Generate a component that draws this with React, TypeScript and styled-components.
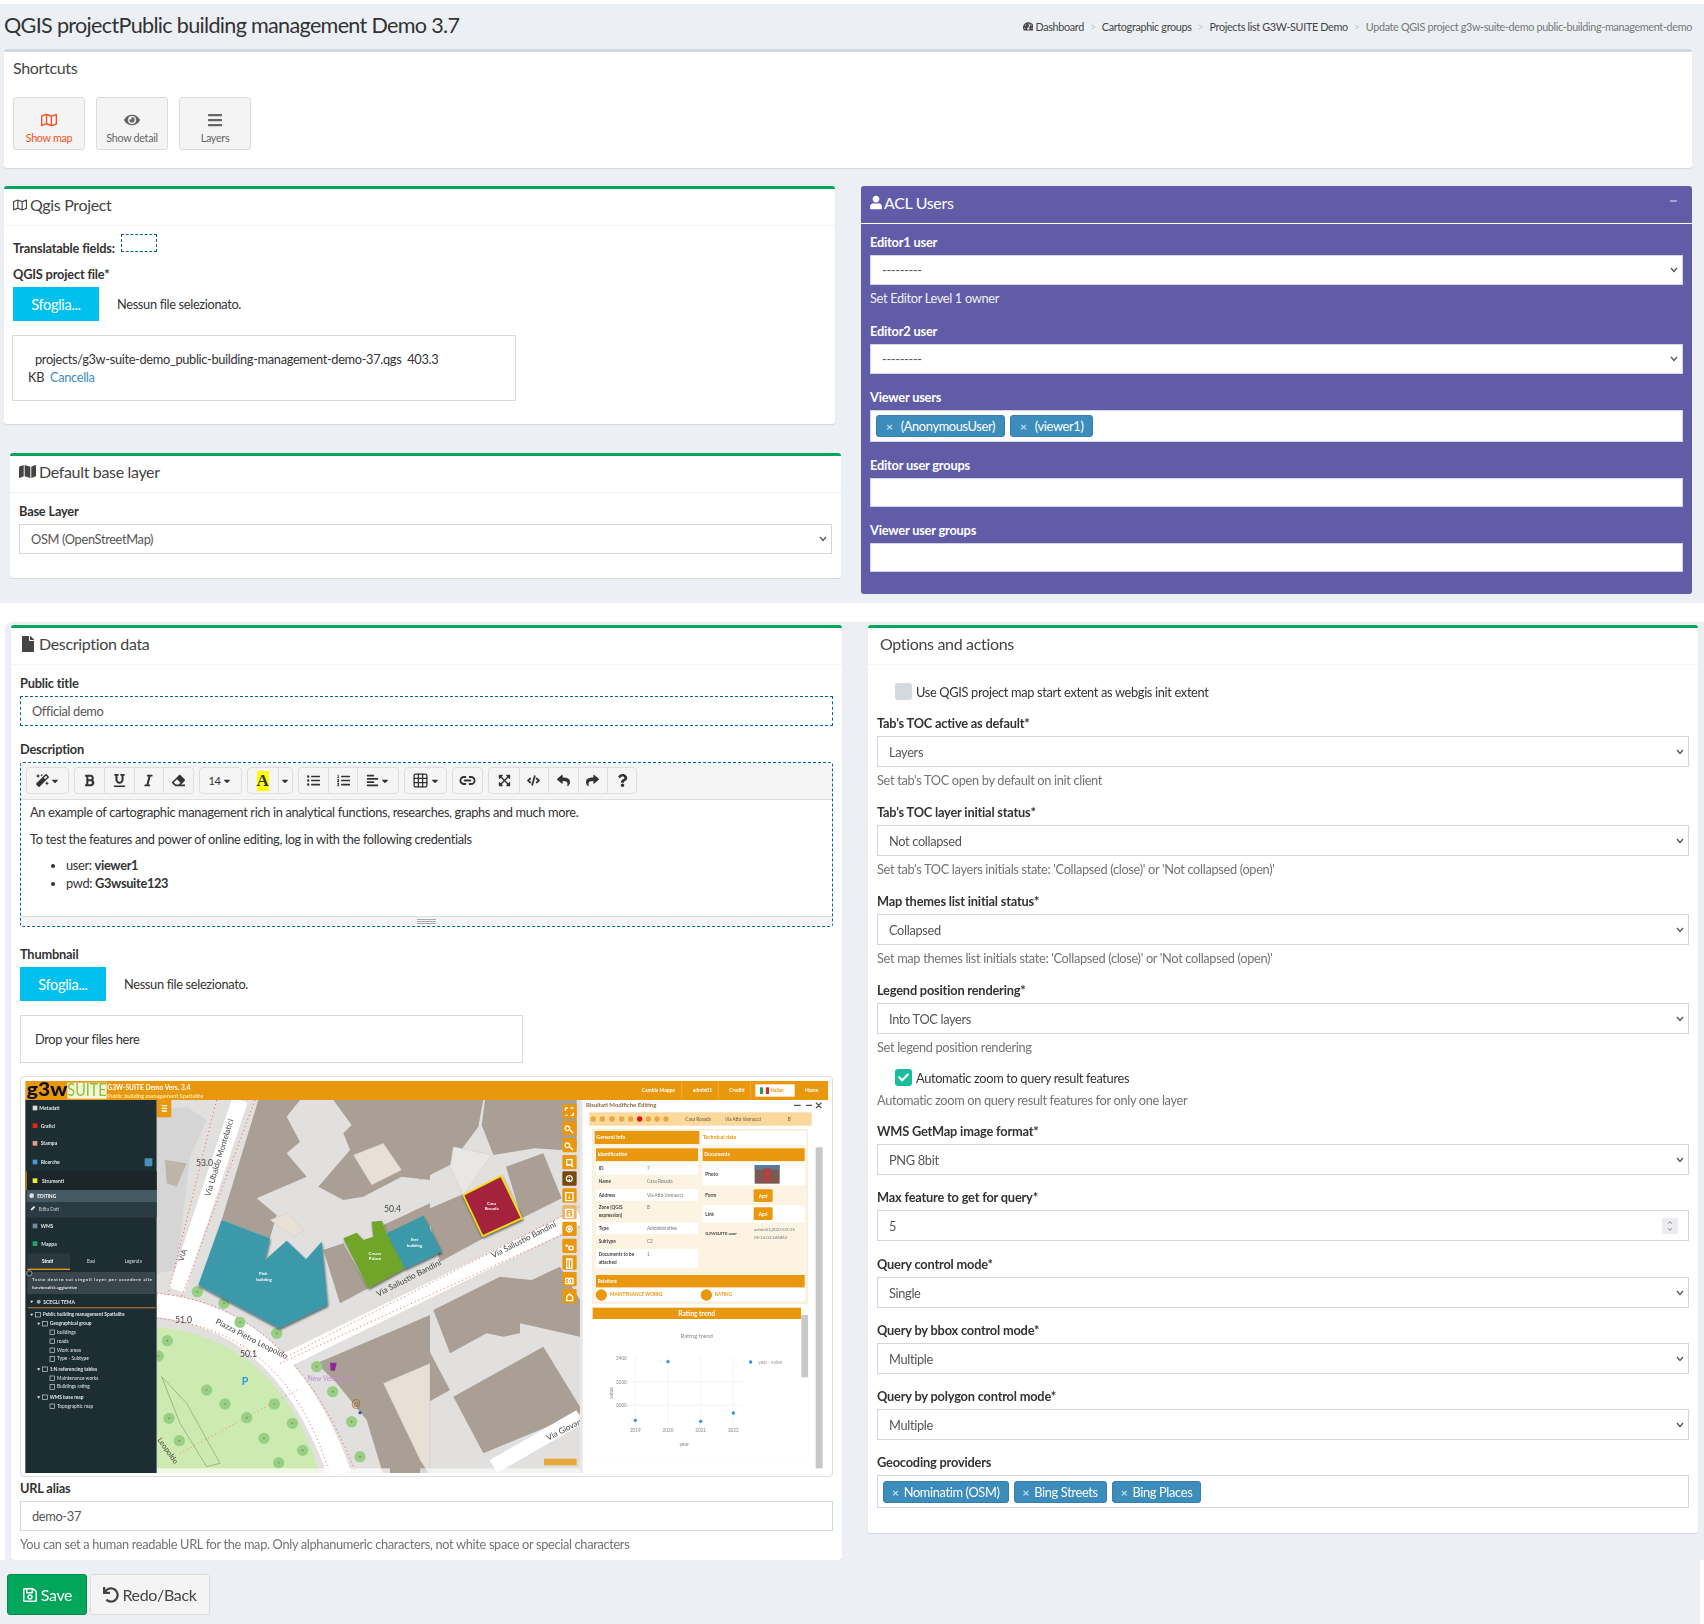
import React from "react";
import styled, { createGlobalStyle } from "styled-components";
import {
  FaRegMap, FaMap, FaEye, FaBars, FaUser, FaFile, FaTachometerAlt, FaRegSave, FaUndo, FaMagic, FaBold, FaUnderline,
  FaItalic, FaEraser, FaListUl, FaListOl, FaAlignLeft, FaExpandArrowsAlt, FaCode, FaReply, FaShare,
  FaQuestion, FaCaretDown, FaCheck, FaMinus, FaChevronUp, FaChevronDown,
} from "react-icons/fa";
import { Grid3x3, Link2 } from "lucide-react";

const chevron = `url("data:image/svg+xml,%3Csvg xmlns='http://www.w3.org/2000/svg' width='8' height='6'%3E%3Cpath d='M1 1l3 3.4L7 1' fill='none' stroke='%23555' stroke-width='1.3'/%3E%3C/svg%3E")`;

const Global = createGlobalStyle`
  html, body { margin: 0; padding: 0; background: #fff; }
  body { font-family: "Lato", "Liberation Sans", sans-serif; font-size: 12.8px; letter-spacing: -0.026em; color: #333; }
  * { box-sizing: border-box; }
  button, input, select { letter-spacing: inherit; }
`;
const Page = styled.div`width: 1704px; min-height: 1624px; padding-top: 4px; background: #fff; display: flex; flex-direction: column;`;
const TopSection = styled.section`background: #ecf0f5; padding: 0 12px 9px 4px; height: 599px;`;
const HeaderBar = styled.header`height: 45px; display: flex; align-items: center; justify-content: space-between;`;
const PageTitle = styled.h1`margin: 0; font-size: 21.6px; letter-spacing: -0.032em; font-weight: 400; color: #333; position: relative; top: -2px;`;
const Crumbs = styled.nav`display: flex; align-items: center; font-size: 10.8px; color: #444; gap: 6px;`;
const CrumbLink = styled.span`display: inline-flex; align-items: center; gap: 2px;`;
const CrumbSep = styled.span`color: #ccc;`;
const CrumbCurrent = styled.span`color: #777;`;
const ShortcutBox = styled.section`height: 119px; background: #fff; border-top: 3px solid #d2d6de; border-radius: 3px; padding: 6px 9px 0; box-shadow: 0 1px 1px rgba(0,0,0,.1);`;
const BoxTitle = styled.h3<{ $icon?: number }>`margin: 0; font-size: 16px; line-height: 20px; font-weight: 400; color: #444; display: flex; align-items: center; gap: 3px; svg { width: ${(p) => p.$icon ?? 16}px; height: ${(p) => p.$icon ?? 16}px; }`;
const ShortcutRow = styled.div`display: flex; gap: 11px; margin-top: 19px;`;
const AppButton = styled.button<{ $active?: boolean }>`width: 72px; height: 53px; padding: 14px 0 0; background: #f4f4f4; border: 1px solid #ddd; border-radius: 3px; font: inherit; font-size: 10.8px; color: ${(p) => (p.$active ? "#f4511e" : "#666")}; display: flex; flex-direction: column; align-items: center; gap: 3px; svg { width: 16px; height: 16px; }`;
const Columns = styled.div`display: flex; gap: 20px; margin-top: 18px; align-items: flex-start;`;
const LeftStack = styled.div`width: 837px; display: flex; flex-direction: column;`;
const Box = styled.section<{ $inset?: boolean; $h?: number; $w?: number }>`width: ${(p) => p.$w ?? 831}px; height: ${(p) => p.$h}px; margin-left: ${(p) => (p.$inset ? 6 : 0)}px; margin-top: ${(p) => (p.$inset ? 29 : 0)}px; background: #fff; border-top: 3px solid #00a65a; border-radius: 3px; box-shadow: 0 1px 1px rgba(0,0,0,.1); flex: none;`;
const BoxHead = styled.div<{ $pad?: number }>`height: 37px; padding: 0 ${(p) => p.$pad ?? 9}px 5px; border-bottom: 1px solid #f4f4f4; display: flex; align-items: center;`;
const BoxBody = styled.div<{ $top?: number }>`padding: ${(p) => p.$top ?? 8}px 9px 0;`;
const Label = styled.label<{ $light?: boolean }>`display: block; height: 20px; line-height: 20px; margin-bottom: 3px; font-weight: 700; font-size: 12.8px; letter-spacing: -0.015em; color: ${(p) => (p.$light ? "#fff" : "#333")};`;
const Group = styled.div<{ $gap?: number }>`margin-bottom: ${(p) => p.$gap ?? 12}px;`;
const Select = styled.select<{ $h?: number }>`display: block; width: 100%; height: ${(p) => p.$h ?? 31}px; padding: 0 11px; appearance: none; background: #fff ${chevron} no-repeat right 4px center; border: 1px solid #d2d6de; border-radius: 0; font: inherit; color: #555;`;
const TextInput = styled.input<{ $h?: number; $dashed?: boolean }>`display: block; width: 100%; height: ${(p) => p.$h ?? 30}px; padding: 0 11px; background: #fff; border: 1px ${(p) => (p.$dashed ? "dashed #00659a" : "solid #d2d6de")}; border-radius: 0; font: inherit; color: #555; outline: none;`;
const Help = styled.div<{ $light?: boolean }>`height: 19px; line-height: 19px; margin-top: 4px; color: ${(p) => (p.$light ? "#f0f0f6" : "#737373")};`;
const TransRow = styled.div`display: flex; align-items: flex-start; height: 24px; margin-bottom: 6px;`;
const TransLabel = styled.span`font-weight: 700; font-size: 12.8px; letter-spacing: -0.015em; line-height: 20px; margin-top: 4px; width: 108px;`;
const TransSlot = styled.div`width: 36px; height: 18px; border: 1px dashed #00659a;`;
const FileRow = styled.div`display: flex; align-items: center; gap: 18px;`;
const BrowseButton = styled.span`width: 86px; height: 34px; background: #00c0ef; color: #fff; font-size: 14.6px; display: flex; align-items: center; justify-content: center;`;
const Dropzone = styled.div<{ $w: number; $h: number; $pad: string }>`width: ${(p) => p.$w}px; height: ${(p) => p.$h}px; margin-top: 14px; margin-left: ${(p) => (p.$w === 504 ? -1 : 0)}px; padding: ${(p) => p.$pad}; border: 1px solid #d9d9d9; line-height: 18px;`;
const FileLine = styled.div<{ $indent?: number }>`padding-left: ${(p) => p.$indent ?? 0}px;`;
const LinkText = styled.a`color: #3c8dbc; margin-left: 3px;`;
const AclBox = styled.section`width: 831px; height: 408px; background: #605ca8; border-radius: 3px; color: #fff;`;
const AclHead = styled.div`height: 38px; border-bottom: 1px solid #fff; padding: 0 9px 4px; display: flex; align-items: center; justify-content: space-between; font-size: 16px;`;
const AclTitle = styled.span`display: flex; align-items: center; gap: 2px; svg { width: 12px; height: 15px; }`;
const AclMinus = styled(FaMinus)`width: 11px; height: 8px; color: rgba(255,255,255,.6); margin: 0 4px 3px 0;`;
const AclBody = styled.div`padding: 8px 9px 0;`;
const TagInput = styled.div<{ $h: number; $pad: number }>`height: ${(p) => p.$h}px; background: #fff; border: 1px solid #d2d6de; padding: ${(p) => p.$pad}px 5px 0; display: flex; gap: 5px; align-items: flex-start;`;
const Tag = styled.span<{ $dense?: boolean }>`height: 22px; padding: 0 ${(p) => (p.$dense ? 8 : 9)}px; background: #3c8dbc; border: 1px solid #367fa9; border-radius: 3px; color: #fff; display: inline-flex; align-items: center; gap: ${(p) => (p.$dense ? 5 : 8)}px;`;
const TagX = styled.span`color: rgba(255,255,255,.7); font-size: 12px; font-weight: 700;`;
const WhiteBand = styled.div`height: 19px; background: #fff;`;
const LowerPanel = styled.section`margin-left: 5px; height: 938px; background: #ecf0f5; border-top-left-radius: 8px; padding: 3px 6px 0; display: flex; gap: 26px; align-items: flex-start;`;
const EditorFrame = styled.div`height: 165px; border: 1px dashed #00659a; border-radius: 3px; display: flex; flex-direction: column; margin-bottom: 17px;`;
const Toolbar = styled.div`height: 37px; background: #f5f5f5; border-bottom: 1px solid #ddd; padding: 4px 0 0 5px; display: flex; gap: 5px; flex: none;`;
const ToolGroup = styled.div`display: flex; height: 27px; border: 1px solid #ddd; border-radius: 4px;`;
const ToolButton = styled.span<{ $w?: number }>`width: ${(p) => p.$w ?? 29.4}px; display: flex; align-items: center; justify-content: center; gap: 1px; color: #333; font-size: 11px; svg { width: 13px; height: 13px; } & + & { border-left: 1px solid #ddd; }`;
const CaretIcon = styled(FaCaretDown)`&& { width: 10px; height: 10px; }`;
const WideIcon = styled.span`display: flex; svg { width: 17px; height: 17px; }`;
const HighlightA = styled.span`background: #ff0; font-family: "Liberation Serif", serif; font-weight: 700; font-size: 17px; line-height: 20px; width: 12px; text-align: center; color: #333;`;
const EditorBody = styled.div`flex: 1; padding: 2px 9px 0; line-height: 20px; color: #333;`;
const Para = styled.p`margin: 0 0 7px;`;
const EditorList = styled.ul`margin: 0; padding-left: 36px; line-height: 18px;`;
const EditorFoot = styled.div`height: 10px; flex: none; background: #f5f5f5; border-top: 1px solid #ddd; display: flex; flex-direction: column; align-items: center; justify-content: center; gap: 1px;`;
const GripLine = styled.i`display: block; width: 19px; height: 1px; background: #aaa;`;
const ImageCard = styled.div`height: 401px; margin-top: 13px; padding: 4px; border: 1px solid #ddd; border-radius: 4px; margin-bottom: 1px;`;
const MapSvg = styled.svg`display: block; width: 803px; height: 392px; letter-spacing: 0;`;
const CheckRow = styled.div<{ $mb?: number }>`display: flex; align-items: center; gap: 4px; padding-left: 18px; height: 17px; margin-bottom: ${(p) => p.$mb ?? 13}px;`;
const CheckMark = styled.span<{ $on?: boolean }>`width: 17px; height: 17px; border-radius: 3px; background: ${(p) => (p.$on ? "#1abc9c" : "#d3d9dc")}; color: #fff; display: flex; align-items: center; justify-content: center; svg { width: 11px; height: 11px; }`;
const NumberWrap = styled.div`position: relative;`;
const Spinner = styled.span`position: absolute; right: 11px; top: 8px; width: 16px; height: 16px; background: #ececf0; display: flex; flex-direction: column; align-items: center; justify-content: center; gap: 2px; color: #888; svg { width: 6px; height: 5px; }`;
const FooterBar = styled.footer`margin-right: 4px; height: 64px; background: #ecf0f5; padding: 14px 0 0 7px; display: flex; gap: 3px;`;
const SaveButton = styled.button`width: 80px; height: 41px; background: #00a65a; border: 1px solid #008d4c; border-radius: 3px; color: #fff; font: inherit; font-size: 16px; display: flex; align-items: center; justify-content: center; gap: 3px;`;
const BackButton = styled.button`width: 120px; height: 41px; background: #f4f4f4; border: 1px solid #ddd; border-radius: 3px; color: #444; font: inherit; font-size: 16px; display: flex; align-items: center; justify-content: center; gap: 3px;`;

const Field = ({ label, value, help, h, light, gap }: { label: string; value: string; help?: string; h?: number; light?: boolean; gap?: number }) => (
  <Group $gap={gap}>
    <Label $light={light}>{label}</Label>
    <Select $h={h} defaultValue={value}><option>{value}</option></Select>
    {help && <Help $light={light}>{help}</Help>}
  </Group>
);

const Tags = ({ items, h, pad, dense }: { items: string[]; h: number; pad: number; dense?: boolean }) => (
  <TagInput $h={h} $pad={pad}>
    {items.map((t) => <Tag $dense={dense} key={t}><TagX>×</TagX>{t}</Tag>)}
  </TagInput>
);

const toolbar: React.ReactNode[][] = [
  [<ToolButton $w={41} key="a"><FaMagic /><CaretIcon /></ToolButton>],
  [<ToolButton key="b"><FaBold /></ToolButton>, <ToolButton key="c"><FaUnderline /></ToolButton>, <ToolButton key="d"><FaItalic /></ToolButton>, <ToolButton key="e"><FaEraser /></ToolButton>],
  [<ToolButton $w={41} key="f">14<CaretIcon /></ToolButton>],
  [<ToolButton $w={30} key="g"><HighlightA>A</HighlightA></ToolButton>, <ToolButton $w={14} key="h"><CaretIcon /></ToolButton>],
  [<ToolButton key="i"><FaListUl /></ToolButton>, <ToolButton key="j"><FaListOl /></ToolButton>, <ToolButton $w={41} key="k"><FaAlignLeft /><CaretIcon /></ToolButton>],
  [<ToolButton $w={41} key="l"><WideIcon><Grid3x3 strokeWidth={1.8} /></WideIcon><CaretIcon /></ToolButton>],
  [<ToolButton $w={29} key="m"><WideIcon><Link2 strokeWidth={2.6} /></WideIcon></ToolButton>],
  [<ToolButton key="n"><FaExpandArrowsAlt /></ToolButton>, <ToolButton key="o"><FaCode /></ToolButton>, <ToolButton key="p"><FaReply /></ToolButton>, <ToolButton key="q"><FaShare /></ToolButton>, <ToolButton key="r"><FaQuestion /></ToolButton>],
];

const trees = [[472,812],[445,858],[590,960],[645,1002],[793,1002],[710,1043],[477,1045],[847,1060],[762,1105],[508,1112],[878,1141],[806,1178],[562,665],[642,700],[690,757],[800,790],[920,890],[968,965],[1050,1160],[1025,1055]];
const brownA = ["745,90 870,90 830,140 870,215 830,250 890,320 740,385 800,435 780,505 635,450","970,90 1260,90 1260,330 1175,320 1060,380 1000,390 925,350 1020,240 1000,190 1025,165","940,540 1000,520 1075,655 990,700","1120,465 1260,400 1260,560 1185,597","920,880 1260,735 1260,1215 1120,1215 1070,1050 980,940"];
const lightA = ["1030,255 1120,220 1175,300 1085,345","1120,940 1260,880 1260,1215 1230,1170","780,450 830,430 885,480 850,500"];
const brownB = ["0,90 190,90 175,170 90,285 0,330","195,90 470,90 470,230 420,240 345,235 220,255 185,165","258,290 370,250 425,385 305,445","18,420 130,372 190,505 60,575","40,720 240,620 335,630 420,590 480,690 480,800 300,760 300,790 250,800 200,790 90,850","100,980 370,830 480,1010 480,1030 190,1150","0,790 90,960 0,1010"];
const sideItems: [string, number, number, string][] = [["Metadati",88,120,"#ddd"],["Grafici",92,173,"#e21"],["Stampa",92,226,"#e98"],["Ricerche",92,282,"#49d"],["Strumenti",96,338,"#ee3"],["WMS",92,474,"#789"],["Mappa",94,527,"#2a6"]];
const treeItems: [string, number, number, boolean][] = [["Public building management Spatialite",98,738,true],["Geographical group",119,765,true],["buildings",141,791,false],["roads",141,818,false],["Work areas",141,845,false],["Type - Subtype",141,871,false],["1:N referencing tables",119,902,true],["Maintenance works",141,929,false],["Buildings rating",141,955,false],["WMS base map",119,986,true],["Topographic map",141,1013,false]];
const toolY = [103,153,204,255,304,355,405,455,506,556,606,657];
const toolGlyph = ["M436 114h8M460 136h-8M436 114v8M460 136v-8M460 114h-8M436 136h8","M442 118a7 7 0 1 0 .1 0M450 130l9 9","M442 118a7 7 0 1 0 .1 0M450 130l9 9","M440 117h16v16h-16zM450 130l9 9","M448 116a9 9 0 1 0 .1 0M448 120v2M448 126v6","M437 116h22v24h-22zM448 122v2M448 127v8","M437 116h22v24h-22zM448 122v2M448 127v8","M448 116a9 9 0 1 0 .1 0M448 122a3 3 0 1 0 .1 0","M436 124h8M440 120v8M447 126h12v10h-12z","M440 114h16v28h-16zM448 114v28","M437 122h22v16h-22zM448 126a4 4 0 1 0 .1 0","M440 138v-12l8-8 10 8v12z"];
const idRows: [string, string, number][] = [["ID","7",300],["Name","Casa Rosada",340],["Address","Via Atto Vannucci",380],["Zone (QGIS","B",418],["expression)","",441],["Type","Administrative",480],["Subtype","C2",520],["Documents to be","1",558],["attached","",581]];

const MapShot = () => (
  <MapSvg viewBox="0 0 803 392" fontFamily="Lato, sans-serif">
    <defs>
      <pattern id="hatch" width="6" height="6" patternUnits="userSpaceOnUse" patternTransform="rotate(-30)">
        <rect width="6" height="6" fill="#b0a69b" /><path d="M0 1.5H6M0 4.5H6" stroke="#9c9287" strokeWidth="1" />
      </pattern>
      <clipPath id="mapArea"><rect x="440" y="90" width="1270" height="1125" /></clipPath>
      <filter id="soft"><feGaussianBlur stdDeviation="0.3" /></filter>
      <filter id="drop"><feDropShadow dx="2" dy="5" stdDeviation="3" floodColor="#000" floodOpacity=".6" /></filter>
    </defs>
    <rect width="803" height="392" fill="#fff" />
    <g filter="url(#soft)">
      <g transform="translate(-15,-11) scale(.33333)">
        <g clipPath="url(#mapArea)">
          <rect x="440" y="90" width="1270" height="1125" fill="#e1e0df" />
          {brownA.map((p) => <polygon key={p} points={p} fill="url(#hatch)" />)}
          <g transform="translate(1230,0)">
            {brownB.map((p) => <polygon key={p} points={p} fill="url(#hatch)" />)}
            <polygon points="100,230 215,255 130,375 90,290" fill="#e9e7e4" stroke="#bbb" />
          </g>
          {lightA.map((p) => <polygon key={p} points={p} fill="#e8dfd5" stroke="#bbb" />)}
          <polygon points="440,120 530,110 590,150 540,260 500,600 440,610" fill="#d5d5d5" />
          <polygon points="465,270 530,280 500,350 470,340" fill="#bdb4aa" />
          <path d="M690 90L500 660" stroke="#fff" strokeWidth="48" fill="none" />
          <path d="M735 90L515 680 440 700" stroke="#f55" strokeWidth="3" strokeDasharray="3 9" fill="none" />
          <path d="M620 90L470 690" stroke="#f55" strokeWidth="3" strokeDasharray="3 9" fill="none" />
          <path d="M440 705C660 730 860 850 990 1215" stroke="#fff" strokeWidth="70" fill="none" />
          <path d="M440 770C640 790 840 900 930 1215L440 1215Z" fill="#cdebb0" />
          <path d="M440 670C680 690 890 830 1040 1215" stroke="#f55" strokeWidth="3" strokeDasharray="3 9" fill="none" />
          <path d="M440 745C660 765 860 880 960 1215" stroke="#f55" strokeWidth="3" strokeDasharray="3 9" fill="none" />
          <path d="M820 875L1710 440" stroke="#fff" strokeWidth="44" fill="none" />
          <path d="M830 860L1710 410" stroke="#f55" strokeWidth="3" strokeDasharray="3 9" fill="none" />
          <path d="M810 880L1710 470" stroke="#f55" strokeWidth="3" strokeDasharray="3 9" fill="none" />
          <path d="M1450 1190L1710 1040" stroke="#fff" strokeWidth="44" fill="none" />
          <path d="M455 920L530 1000 630 1180 590 1190 510 1060Z" fill="none" stroke="#8a9a70" strokeWidth="2" />
          <path d="M510 1150L860 960" stroke="#f77" strokeWidth="3" strokeDasharray="3 9" />
          {trees.map(([x, y]) => <g key={`${x}-${y}`}><circle cx={x} cy={y} r="17" fill="#94d184" /><circle cx={x} cy={y} r="2.5" fill="#d55" /></g>)}
          <g filter="url(#drop)">
            <polygon points="635,450 780,505 765,570 830,512 888,568 935,515 953,705 808,775 565,645" fill="#3a99a9" />
            <polygon points="1000,505 1040,488 1060,510 1090,500 1085,455 1115,452 1130,490 1185,595 1075,655" fill="#6fa52a" />
            <polygon points="1130,490 1240,437 1295,545 1185,597" fill="#3a99a9" />
            <polygon points="1360,375 1473,318 1535,445 1418,498" fill="#a4243b" stroke="#f4e20e" strokeWidth="5" />
          </g>
          <g fontSize="13" fontWeight="700" fill="#fff" textAnchor="middle">
            <text x="760" y="616">Pink</text><text x="762" y="632">building</text>
            <text x="1095" y="555">Cascar</text><text x="1095" y="571">Palace</text>
            <text x="1214" y="514">Iket</text><text x="1214" y="530">building</text>
            <text x="1445" y="405">Casa</text><text x="1445" y="421">Rosada</text>
          </g>
          <g fill="#444" fontSize="26">
            <text x="558" y="288">53.0</text><text x="1122" y="425">50.4</text><text x="495" y="760">51.0</text><text x="690" y="860">50.1</text>
            <text transform="translate(600,380) rotate(-73)" fontSize="24">Via Ubaldo Montelatici</text>
            <text transform="translate(615,760) rotate(27)" fontSize="24">Piazza Pietro Leopoldo</text>
            <text transform="translate(1105,680) rotate(-27)" fontSize="24">Via Sallustio Bandini</text>
            <text transform="translate(1450,565) rotate(-27)" fontSize="24">Via Sallustio Bandini</text>
            <text transform="translate(1615,1112) rotate(-27)" fontSize="24">Via Giovanni</text>
            <text transform="translate(520,575) rotate(-73)" fontSize="22">VIA</text>
            <text transform="translate(442,1110) rotate(55)" fontSize="22">Leopoldo</text>
            <text x="893" y="932" fill="#c48bd0" fontSize="20">New Veradonna</text>
          </g>
          <text x="1024" y="1012" fill="#a5682a" fontSize="34">@</text>
          <circle cx="1050" cy="1028" r="5" fill="#35a" />
          <text x="695" y="945" fill="#2a9de0" fontSize="32" fontWeight="700">P</text>
          <polygon points="960,878 980,878 975,902 962,902" fill="#8a2a9a" />
        </g>
        <rect x="440" y="1195" width="700" height="20" fill="#fff" opacity=".7" />
        <rect x="441" y="90" width="43" height="52" fill="#e99811" />
        <path d="M455 107H471M455 115H471M455 123H471" stroke="#fff" strokeWidth="4" />
        <rect x="46" y="90" width="394" height="1120" fill="#1f2d33" />
        <rect x="46" y="304" width="394" height="56" fill="#1a262c" />
        <rect x="46" y="304" width="4" height="56" fill="#e99811" />
        {sideItems.map(([t, x, y, c]) => <g key={t}><rect x="68" y={y - 13} width="14" height="14" fill={c} /><text x={x} y={y} fontSize="15" fontWeight="700" fill="#dfe6e8">{t}</text></g>)}
        <rect x="50" y="360" width="390" height="36" fill="#455a64" />
        <rect x="50" y="396" width="390" height="46" fill="#2a3a42" />
        <circle cx="65" cy="377" r="7" fill="#dde" />
        <text x="82" y="384" fontSize="14" fontWeight="700" fill="#fff">EDITING</text>
        <rect x="62" y="412" width="14" height="5" fill="#fff" transform="rotate(-45 69 415)" />
        <text x="86" y="424" fontSize="14" fill="#cfd8dc">Edita Dati</text>
        <rect x="404" y="265" width="23" height="24" rx="3" fill="#4a90b8" />
        <rect x="52" y="550" width="128" height="48" fill="#2a383f" />
        <rect x="52" y="596" width="128" height="4" fill="#e99811" />
        <text x="96" y="578" fontSize="14" fontWeight="700" fill="#fff">Strati</text>
        <text x="230" y="578" fontSize="14" fill="#cfd8dc">Basi</text>
        <text x="344" y="578" fontSize="14" fill="#cfd8dc">Legenda</text>
        <rect x="52" y="606" width="384" height="66" fill="#37454c" />
        <circle cx="58" cy="610" r="8" fill="#1f2d33" stroke="#ccc" strokeWidth="2" />
        <text x="66" y="634" fontSize="13.5" fontWeight="700" fill="#dfe6e8" textLength="360">Tasto destro sui singoli layer per accedere alle</text>
        <text x="66" y="656" fontSize="13.5" fontWeight="700" fill="#dfe6e8">funzionalità aggiuntive</text>
        <path d="M60 692H70L65 699Z" fill="#dde" />
        <circle cx="86" cy="695" r="6" fill="#9ab" />
        <text x="100" y="701" fontSize="15" fontWeight="700" fill="#dfe6e8">SCEGLI TEMA</text>
        <rect x="54" y="711" width="382" height="4" fill="#a5682a" />
        {treeItems.map(([t, x, y, b]) => <g key={t}>{b && <path d={`M${x - 38} ${y - 7}H${x - 28}L${x - 33} ${y}Z`} fill="#dde" />}<rect x={x - 21} y={y - 11} width="14" height="14" fill="none" stroke="#cfd8dc" strokeWidth="2" /><text x={x} y={y} fontSize="14.5" fontWeight={b ? 700 : 400} fill="#dfe6e8">{t}</text></g>)}
        <rect x="46" y="33" width="1214" height="57" fill="#e99811" />
        <rect x="172" y="38" width="118" height="48" fill="#f3f4dc" />
        <text x="50" y="78" fontSize="58" fontWeight="900" fill="#111" textLength="122" lengthAdjust="spacingAndGlyphs">g3w</text>
        <text x="172" y="78" fontSize="52" fill="#8fbf2f" textLength="118" lengthAdjust="spacingAndGlyphs">SUITE</text>
        <text x="292" y="60" fontSize="20" fontWeight="700" fill="#fff">G3W-SUITE Demo Vers. 3.4</text>
        <text x="292" y="85" fontSize="17" fontWeight="700" fill="#fbe9a0">Public building management Spatialite</text>
      </g>
      <g transform="translate(395,-11) scale(.33333)">
        <rect x="30" y="33" width="1194" height="57" fill="#e99811" />
        <rect x="480" y="90" width="744" height="1120" fill="#fff" />
        <rect x="0" y="1195" width="480" height="15" fill="#fff" opacity=".6" />
        <rect x="372" y="1166" width="98" height="20" fill="#e99811" opacity=".8" />
        {toolY.map((y, i) => <g key={y}><rect x="427" y={y} width="43" height="43" rx="4" fill={i === 4 ? "#7a4a10" : i === 6 ? "#eab765" : "#e99811"} /><path d={toolGlyph[i]} transform={`translate(0,${y - 103})`} fill="none" stroke="#fff" strokeWidth="4" /></g>)}
        <rect x="480" y="90" width="8" height="1120" fill="#e8e8e8" />
        <text x="498" y="111" fontSize="18" fontWeight="700" fill="#8a6a3a">Risultati Modifiche Editing</text>
        <path d="M1122 106H1142M1158 106H1176M1188 98L1204 114M1204 98L1188 114" stroke="#555" strokeWidth="4" />
        <rect x="508" y="127" width="667" height="40" fill="#fbd89b" />
        {[520,547,576,605,632,659,685,711,738].map((x) => <circle key={x} cx={x} cy="147" r="8" fill={x === 659 ? "#e11" : "#e8a83e"} />)}
        <text x="796" y="152" fontSize="14" fill="#6a5a40">Casa Rosada</text>
        <text x="915" y="152" fontSize="14" fill="#6a5a40">Via Atto Vannucci</text>
        <text x="1103" y="152" fontSize="14" fill="#6a5a40">B</text>
        <rect x="518" y="178" width="645" height="522" fill="#fdf3e3" stroke="#f5dcb0" />
        <rect x="524" y="183" width="314" height="39" fill="#e99811" />
        <text x="529" y="208" fontSize="16" fontWeight="700" fill="#fff">General info</text>
        <rect x="840" y="183" width="320" height="42" fill="#fff" />
        <text x="848" y="208" fontSize="16" fontWeight="700" fill="#e99811">Technical data</text>
        <rect x="528" y="235" width="306" height="38" fill="#e99811" />
        <text x="533" y="259" fontSize="15" fontWeight="700" fill="#fff">Identification</text>
        <rect x="848" y="235" width="306" height="38" fill="#e99811" />
        <text x="853" y="259" fontSize="15" fontWeight="700" fill="#fff">Documents</text>
        <rect x="528" y="278" width="306" height="36" fill="#fff" />
        <rect x="528" y="358" width="306" height="34" fill="#fff" />
        <rect x="528" y="458" width="306" height="34" fill="#fff" />
        <rect x="528" y="537" width="306" height="58" fill="#fff" />
        {idRows.map(([a, b, y]) => <g key={a}><text x="536" y={y} fontSize="14" fontWeight="700" fill="#444">{a}</text><text x="681" y={y} fontSize="14" fill="#777">{b}</text></g>)}
        <rect x="848" y="278" width="306" height="68" fill="#fff" />
        <rect x="848" y="406" width="306" height="52" fill="#fff" />
        <text x="856" y="318" fontSize="14" fontWeight="700" fill="#444">Photo</text>
        <rect x="1004" y="285" width="75" height="56" fill="#7a5a50" /><rect x="1004" y="285" width="75" height="14" fill="#5a7aa0" /><rect x="1030" y="295" width="22" height="40" fill="#a44" />
        <text x="856" y="382" fontSize="14" fontWeight="700" fill="#444">Form</text>
        <rect x="1001" y="358" width="57" height="38" rx="4" fill="#e99811" /><text x="1016" y="383" fontSize="14" fontWeight="700" fill="#fff">Apri</text>
        <text x="856" y="437" fontSize="14" fontWeight="700" fill="#444">Link</text>
        <rect x="1001" y="412" width="57" height="38" rx="4" fill="#e99811" /><text x="1016" y="437" fontSize="14" fontWeight="700" fill="#fff">Apri</text>
        <text x="856" y="494" fontSize="13" fontWeight="700" fill="#444">G3WSUITE user</text>
        <text x="1002" y="484" fontSize="13" fill="#777">admin01|2022-03-25</text>
        <text x="1002" y="506" fontSize="13" fill="#777">09:14:03.546862</text>
        <rect x="528" y="615" width="626" height="37" fill="#e99811" />
        <text x="533" y="638" fontSize="14" fontWeight="700" fill="#fff">Relations</text>
        <rect x="528" y="655" width="626" height="38" fill="#fff" />
        <circle cx="544" cy="675" r="17" fill="#e99811" /><circle cx="859" cy="675" r="17" fill="#e99811" />
        <text x="570" y="679" fontSize="14" fontWeight="700" fill="#e99811">MAINTENANCE WORKS</text>
        <text x="885" y="679" fontSize="14" fontWeight="700" fill="#e99811">RATING</text>
        <rect x="510" y="713" width="655" height="455" fill="#fff" stroke="#f5f5f5" />
        <rect x="518" y="713" width="625" height="34" fill="#e99811" />
        <text x="830" y="737" fontSize="20" fontWeight="700" fill="#fff" textAnchor="middle">Rating trend</text>
        <rect x="1144" y="735" width="20" height="187" fill="#c8c8c8" />
        <rect x="1187" y="232" width="21" height="963" fill="#c8c8c8" />
        <text x="830" y="803" fontSize="18" fill="#888" textAnchor="middle">Rating trend</text>
        <path d="M646 860V1062M744 860V1062M842 860V1062M940 860V1062M622 935H965M622 1006H965" stroke="#eee" strokeWidth="2" />
        {[["3400",869],["3200",941],["3000",1012]].map(([t, y]) => <text key={t} x="588" y={y} fontSize="14" fill="#888">{t}</text>)}
        {[["2019",646],["2020",744],["2021",842],["2022",940]].map(([t, x]) => <text key={t} x={x} y="1085" fontSize="14" fill="#888" textAnchor="middle">{t}</text>)}
        {[[646,1051],[744,875],[842,1054],[940,1029],[992,876]].map(([x, y]) => <circle key={x} cx={x} cy={y} r="5" fill="#2e90ef" />)}
        <text x="1015" y="882" fontSize="14" fill="#999">year - value</text>
        <text x="793" y="1127" fontSize="15" fill="#888" textAnchor="middle">year</text>
        <text transform="translate(578,986) rotate(-90)" fontSize="15" fill="#888">value</text>
        <g fontSize="15" fontWeight="700" fill="#fff">
          <text x="665" y="66">Cambia Mappa</text><text x="818" y="66">admin01</text><text x="928" y="66">Crediti</text><text x="1155" y="66">Home</text>
        </g>
        <path d="M785 33V90M895 33V90M992 33V90" stroke="#f1b453" strokeWidth="2" />
        <rect x="1006" y="43" width="118" height="37" fill="#fff" />
        <rect x="1020" y="52" width="9" height="20" fill="#2a9a4a" /><rect x="1029" y="52" width="9" height="20" fill="#eee" /><rect x="1038" y="52" width="9" height="20" fill="#d22" />
        <text x="1053" y="67" fontSize="14" fontWeight="700" fill="#e99811">Italian</text>
      </g>
    </g>
  </MapSvg>
);

export default function App() {
  return (
    <Page>
      <Global />
      <TopSection>
        <HeaderBar>
          <PageTitle>QGIS projectPublic building management Demo 3.7</PageTitle>
          <Crumbs>
            <CrumbLink><FaTachometerAlt />Dashboard</CrumbLink><CrumbSep>&gt;</CrumbSep>
            <CrumbLink>Cartographic groups</CrumbLink><CrumbSep>&gt;</CrumbSep>
            <CrumbLink>Projects list G3W-SUITE Demo</CrumbLink><CrumbSep>&gt;</CrumbSep>
            <CrumbCurrent>Update QGIS project g3w-suite-demo public-building-management-demo</CrumbCurrent>
          </Crumbs>
        </HeaderBar>
        <ShortcutBox>
          <BoxTitle>Shortcuts</BoxTitle>
          <ShortcutRow>
            <AppButton $active><FaRegMap />Show map</AppButton>
            <AppButton><FaEye />Show detail</AppButton>
            <AppButton><FaBars />Layers</AppButton>
          </ShortcutRow>
        </ShortcutBox>
        <Columns>
          <LeftStack>
            <Box $h={238}>
              <BoxHead><BoxTitle $icon={14}><FaRegMap />Qgis Project</BoxTitle></BoxHead>
              <BoxBody>
                <TransRow><TransLabel>Translatable fields:</TransLabel><TransSlot /></TransRow>
                <Label>QGIS project file*</Label>
                <FileRow><BrowseButton>Sfoglia...</BrowseButton>Nessun file selezionato.</FileRow>
                <Dropzone $w={504} $h={66} $pad="14px 15px">
                  <FileLine $indent={7}>projects/g3w-suite-demo_public-building-management-demo-37.qgs &nbsp;403.3</FileLine>
                  <FileLine>KB <LinkText>Cancella</LinkText></FileLine>
                </Dropzone>
              </BoxBody>
            </Box>
            <Box $inset $h={125}>
              <BoxHead><BoxTitle $icon={17}><FaMap />Default base layer</BoxTitle></BoxHead>
              <BoxBody><Field label="Base Layer" value="OSM (OpenStreetMap)" h={30} /></BoxBody>
            </Box>
          </LeftStack>
          <AclBox>
            <AclHead><AclTitle><FaUser />ACL Users</AclTitle><AclMinus /></AclHead>
            <AclBody>
              <Field light label="Editor1 user" value="---------" h={30} help="Set Editor Level 1 owner" gap={13} />
              <Field light label="Editor2 user" value="---------" h={30} gap={13} />
              <Group $gap={13}><Label $light>Viewer users</Label><Tags items={["(AnonymousUser)", "(viewer1)"]} h={32} pad={4} /></Group>
              <Group $gap={13}><Label $light>Editor user groups</Label><TextInput $h={29} readOnly /></Group>
              <Group $gap={0}><Label $light>Viewer user groups</Label><TextInput $h={29} readOnly /></Group>
            </AclBody>
          </AclBox>
        </Columns>
      </TopSection>
      <WhiteBand />
      <LowerPanel>
        <Box $h={935}>
          <BoxHead><BoxTitle><FaFile />Description data</BoxTitle></BoxHead>
          <BoxBody $top={8}>
            <Group $gap={13}><Label>Public title</Label><TextInput $dashed readOnly value="Official demo" /></Group>
            <Label>Description</Label>
            <EditorFrame>
              <Toolbar>{toolbar.map((g, i) => <ToolGroup key={i}>{g}</ToolGroup>)}</Toolbar>
              <EditorBody>
                <Para>An example of cartographic management rich in analytical functions, researches, graphs and much more.</Para>
                <Para>To test the features and power of online editing, log in with the following credentials</Para>
                <EditorList>
                  <li>user: <b>viewer1</b></li>
                  <li>pwd: <b>G3wsuite123</b></li>
                </EditorList>
              </EditorBody>
              <EditorFoot><GripLine /><GripLine /><GripLine /></EditorFoot>
            </EditorFrame>
            <Label>Thumbnail</Label>
            <FileRow><BrowseButton>Sfoglia...</BrowseButton>Nessun file selezionato.</FileRow>
            <Dropzone $w={503} $h={48} $pad="14px 14px">Drop your files here</Dropzone>
            <ImageCard><MapShot /></ImageCard>
            <Label>URL alias</Label>
            <TextInput readOnly value="demo-37" />
            <Help>You can set a human readable URL for the map. Only alphanumeric characters, not white space or special characters</Help>
          </BoxBody>
        </Box>
        <Box $w={830} $h={908}>
          <BoxHead $pad={12}><BoxTitle>Options and actions</BoxTitle></BoxHead>
          <BoxBody $top={18}>
            <CheckRow><CheckMark />Use QGIS project map start extent as webgis init extent</CheckRow>
            <Field label="Tab's TOC active as default*" value="Layers" help="Set tab's TOC open by default on init client" />
            <Field label="Tab's TOC layer initial status*" value="Not collapsed" help="Set tab's TOC layers initials state: 'Collapsed (close)' or 'Not collapsed (open)'" />
            <Field label="Map themes list initial status*" value="Collapsed" help="Set map themes list initials state: 'Collapsed (close)' or 'Not collapsed (open)'" />
            <Field label="Legend position rendering*" value="Into TOC layers" help="Set legend position rendering" />
            <CheckRow $mb={5}><CheckMark $on><FaCheck /></CheckMark>Automatic zoom to query result features</CheckRow>
            <Group $gap={11}><Help>Automatic zoom on query result features for only one layer</Help></Group>
            <Field label="WMS GetMap image format*" value="PNG 8bit" />
            <Group $gap={13}>
              <Label>Max feature to get for query*</Label>
              <NumberWrap><TextInput $h={31} readOnly value="5" /><Spinner><FaChevronUp /><FaChevronDown /></Spinner></NumberWrap>
            </Group>
            <Field label="Query control mode*" value="Single" />
            <Field label="Query by bbox control mode*" value="Multiple" />
            <Field label="Query by polygon control mode*" value="Multiple" />
            <Group $gap={0}><Label>Geocoding providers</Label><Tags dense items={["Nominatim (OSM)", "Bing Streets", "Bing Places"]} h={33} pad={5} /></Group>
          </BoxBody>
        </Box>
      </LowerPanel>
      <FooterBar>
        <SaveButton><FaRegSave />Save</SaveButton>
        <BackButton><FaUndo />Redo/Back</BackButton>
      </FooterBar>
    </Page>
  );
}
